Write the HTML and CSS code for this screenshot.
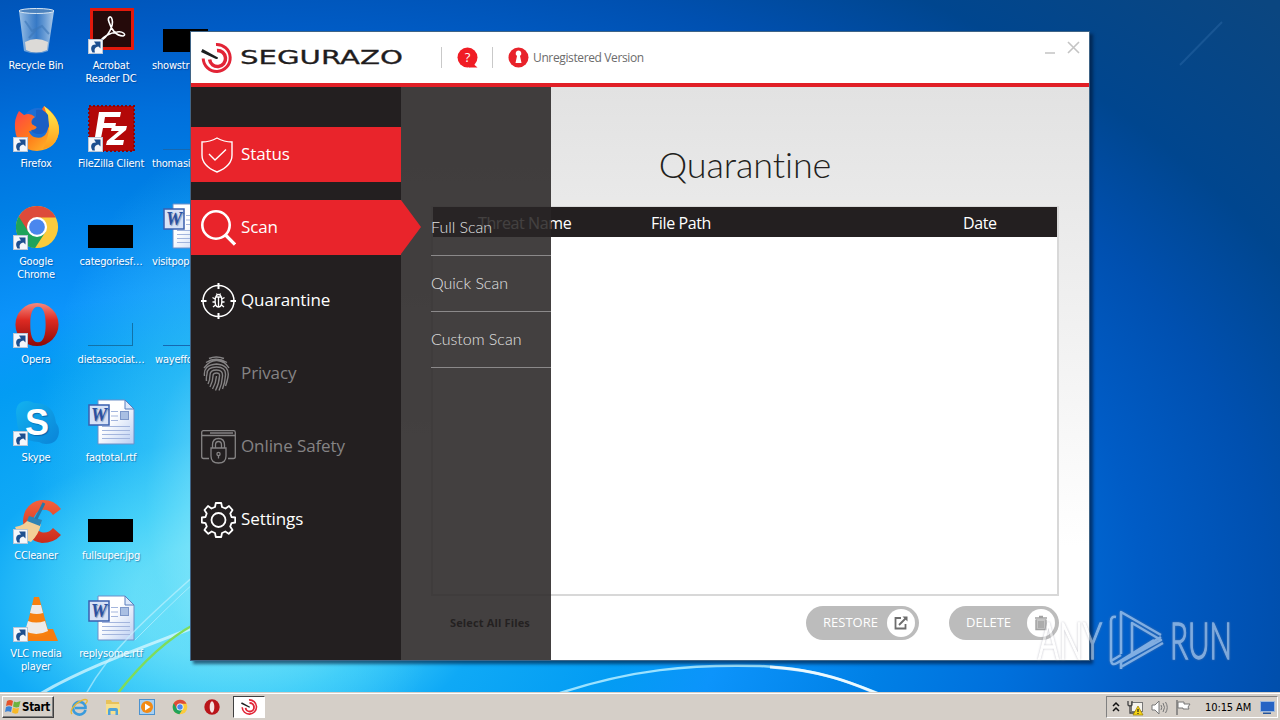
FILE: index.html
```html
<!DOCTYPE html>
<html lang="en">
<head>
    <meta charset="UTF-8">
    <meta name="viewport" content="width=device-width, initial-scale=1.0">
    <title>Segurazo</title>
    <link rel="stylesheet" href="styles.css">
</head>
<body>

    <!-- shared icons -->
    <svg class="defs" width="0" height="0">
        <defs>
            <linearGradient id="fox" x1="0" y1="0" x2="1" y2="1"><stop offset="0" stop-color="#ff3b4e"/><stop offset=".5" stop-color="#ff7a1a"/><stop offset="1" stop-color="#ffcb2e"/></linearGradient>
            <linearGradient id="foxTail" x1="0" y1="0" x2="0" y2="1"><stop offset="0" stop-color="#fff04d"/><stop offset="1" stop-color="#ff9a1c"/></linearGradient>
            <linearGradient id="operaRed" x1="0" y1="0" x2="0" y2="1"><stop offset="0" stop-color="#f58a80"/><stop offset=".4" stop-color="#dd2a22"/><stop offset="1" stop-color="#8c0a08"/></linearGradient>
            <linearGradient id="skypeBlue" x1="0" y1="0" x2="1" y2="1"><stop offset="0" stop-color="#12b2f0"/><stop offset="1" stop-color="#0a84d8"/></linearGradient>
            <linearGradient id="paper" x1="0" y1="0" x2="1" y2="1"><stop offset=".4" stop-color="#fff"/><stop offset="1" stop-color="#b9cdf2"/></linearGradient>
            <linearGradient id="glass" x1="0" y1="0" x2="1" y2="0"><stop offset="0" stop-color="#b8d4ee" stop-opacity=".85"/><stop offset=".5" stop-color="#5b8fc9" stop-opacity=".6"/><stop offset="1" stop-color="#c3daf0" stop-opacity=".9"/></linearGradient>
            <linearGradient id="ccRed" x1="0" y1="0" x2="0" y2="1"><stop offset="0" stop-color="#f5623c"/><stop offset="1" stop-color="#c92b1c"/></linearGradient>
        </defs>
        <symbol id="shortcut" viewBox="0 0 15 15">
            <rect x=".5" y=".5" width="14" height="14" fill="#f4f7fb" stroke="#b9c6d6"/>
            <path d="M4.500 13.500C1.500 8.500 4 5 8 5.500L6 2.500H12.500V9.500L10.500 7.500C7 8 6 10 7 13.500Z" fill="#1d4f8f"/>
        </symbol>
        <symbol id="word" viewBox="0 0 48 48">
            <path d="M11 2H38L47 11V46H11Z" fill="url(#paper)" stroke="#6d8fc8"/>
            <path d="M38 2V11H47Z" fill="#dce8fa" stroke="#5b7fbd"/>
            <path d="M24 13.500H31M24 18H31M24 22.500H31M15 28.500H43M15 32.500H43M15 36.500H43M15 40.500H43" stroke="#a3b5dd"/>
            <rect x="33.500" y="13.500" width="8" height="8" fill="#a9bfe3" stroke="#7d97c9"/>
            <rect x="2" y="7" width="20" height="20" fill="#d7e2f7" stroke="#3a5fae" stroke-width="1.500"/>
            <text x="12" y="23" class="word-letter">W</text>
        </symbol>
        <symbol id="chrome" viewBox="0 0 48 48">
            <circle cx="24" cy="24" r="22" fill="#fbcb3c"/>
            <path d="M24 24L5 13A22 22 0 0 0 22 46L33 29Z" fill="#1fa35b"/>
            <path d="M5 13A22 22 0 0 1 43.500 14H24L15 29Z" fill="#dd4b3a"/>
            <circle cx="24" cy="24" r="10.500" fill="#fff"/>
            <circle cx="24" cy="24" r="8.200" fill="#4a87ee"/>
        </symbol>
        <symbol id="opera" viewBox="0 0 48 48">
            <path fill-rule="evenodd" d="M24 2A22 22 0 1 0 24 47A22 22 0 1 0 24 2ZM25 6C31 6 33 14 33 24.500C33 35 31 43 25 43C19 43 17 35 17 24.500C17 14 19 6 25 6Z" fill="url(#operaRed)"/>
        </symbol>
        <symbol id="logo" viewBox="0 0 32 34">
            <g fill="none" stroke="#e22436" stroke-width="3">
                <path d="M15 3.500A13.500 13.500 0 1 1 2.200 17.500"/>
                <path d="M16 9.500A8 8 0 1 1 8.600 18.500" stroke-width="3.500"/>
            </g>
            <path d="M1.500 8L17 16.500Q17 18.500 15 18L0 11Z" fill="#1c1f20"/>
        </symbol>
    </svg>

    <div class="desktop">
        <svg class="streaks" viewBox="0 0 1280 692" width="1280" height="692">
            <g fill="none">
                <path d="M40 694C90 665 150 645 200 625" stroke="#d9f8ff" stroke-width="3" opacity=".75"/>
                <path d="M86 694C110 650 150 615 195 575" stroke="#c9f4ff" stroke-width="1.500" opacity=".6"/>
                <path d="M135 640C155 620 175 600 195 582" stroke="#c9f4ff" opacity=".6"/>
                <path d="M118 693C140 665 165 640 195 624" stroke="#7fdc5a" stroke-width="2.500"/>
                <path d="M560 693C630 670 690 664 760 666C810 668 845 680 880 694" stroke="#9be2ff" stroke-width="2.500"/>
                <path d="M770 667C820 670 850 682 878 694" stroke="#fff" stroke-width="3" opacity=".8"/>
                <path d="M1180 65L1222 22" stroke="#4d86c4" stroke-width="2" opacity=".25"/>
            </g>
        </svg>

        <div class="icons">
            <div class="shortcut">
                <svg class="icon" viewBox="0 0 48 48">
                    <path d="M7 5L12 45Q24 50 36 45L42 5Z" fill="url(#glass)"/>
                    <path d="M13 36Q24 30 36 36L35 44Q24 49 14 44Z" fill="#dcdad7"/>
                    <path d="M13 15L20 25L30 20L37 28M17 32L24 24" stroke="#3c76b8" stroke-width="2" fill="none" opacity=".6"/>
                    <ellipse cx="24.500" cy="5" rx="17.500" ry="2.500" fill="#4c82bd" stroke="#dbe9f5"/>
                </svg>
                <span>Recycle Bin</span>
            </div>
            <div class="shortcut">
                <svg class="icon" viewBox="0 0 48 48">
                    <rect x="3" y="2" width="44" height="42" fill="#e2190c"/>
                    <rect x="6" y="5" width="38" height="36" fill="#250a0a"/>
                    <path d="M13 35C21 31 27 20 25 13C24 9 20 11 22 16C24 23 29 30 36 30C40 29 36 25 30 26C23 27 18 29 13 35" fill="none" stroke="#fff" stroke-width="1.600"/>
                    <use href="#shortcut" x="1" y="33" width="15" height="15"/>
                </svg>
                <span>Acrobat<br>Reader DC</span>
            </div>
            <div class="shortcut cut">
                <div class="thumb"></div>
                <span>showstr</span>
            </div>

            <div class="shortcut">
                <svg class="icon" viewBox="0 0 48 48">
                    <circle cx="26" cy="20" r="16" fill="#1c6fd6"/>
                    <path d="M30 5Q40 16 35 28Q31 36 22 33Q18 31 17 27Q22 28 25 23L20 20Q18 16 23 13Q18 8 12 11L7 7Q2 15 3 25Q5 46 25 47Q46 45 47 26Q47 12 32 2Z" fill="url(#fox)"/>
                    <path d="M32 2Q48 14 47 28Q44 43 31 45Q37 33 37 22Q36 12 32 2Z" fill="url(#foxTail)"/>
                    <path d="M24 6Q32 5 36 11L37 22Q34 31 27 30Q21 30 19 26Q24 26 25 23L20 20Q19 16 24 13Z" fill="#1a5fc4"/>
                    <use href="#shortcut" x="1" y="33" width="15" height="15"/>
                </svg>
                <span>Firefox</span>
            </div>
            <div class="shortcut">
                <svg class="icon" viewBox="0 0 48 48">
                    <rect x="2" y="2" width="45" height="45" fill="#b30808" stroke="#8b0508" stroke-width="2" stroke-dasharray="2 2"/>
                    <path d="M12 8H34L33 13H18L17 19H29L28 24H16L13 39H7Z" fill="#fff"/>
                    <path d="M25 22H40L39 26L27 36H37L36 41H19L20 37L32 27H24Z" fill="#fff"/>
                    <use href="#shortcut" x="1" y="33" width="15" height="15"/>
                </svg>
                <span>FileZilla Client</span>
            </div>
            <div class="shortcut cut">
                <div class="thumb line"></div>
                <span>thomasin</span>
            </div>

            <div class="shortcut">
                <svg class="icon" viewBox="0 0 48 48">
                    <use href="#chrome" x="2" y="2" width="46" height="46"/>
                    <use href="#shortcut" x="1" y="33" width="15" height="15"/>
                </svg>
                <span>Google<br>Chrome</span>
            </div>
            <div class="shortcut">
                <div class="thumb"></div>
                <span>categoriesf…</span>
            </div>
            <div class="shortcut cut">
                <svg class="icon" viewBox="0 0 48 48"><use href="#word"/></svg>
                <span>visitpopu</span>
            </div>

            <div class="shortcut">
                <svg class="icon" viewBox="0 0 48 48">
                    <use href="#opera" x="2" y="0" width="46" height="48"/>
                    <use href="#shortcut" x="1" y="33" width="15" height="15"/>
                </svg>
                <span>Opera</span>
            </div>
            <div class="shortcut">
                <div class="thumb outline"></div>
                <span>dietassociat…</span>
            </div>
            <div class="shortcut cut late">
                <div class="thumb line"></div>
                <span>wayeffo</span>
            </div>

            <div class="shortcut">
                <svg class="icon" viewBox="0 0 48 48">
                    <path d="M4 15Q4 3 15 3Q19 3 22 5Q42 5 44 25Q47 28 47 34Q46 46 34 46Q30 46 27 44Q6 43 5 24Z" fill="url(#skypeBlue)"/>
                    <text x="25" y="37" class="skype-letter">S</text>
                    <use href="#shortcut" x="1" y="33" width="15" height="15"/>
                </svg>
                <span>Skype</span>
            </div>
            <div class="shortcut">
                <svg class="icon" viewBox="0 0 48 48"><use href="#word"/></svg>
                <span>faqtotal.rtf</span>
            </div>
            <div></div>

            <div class="shortcut">
                <svg class="icon" viewBox="0 0 48 48">
                    <path d="M49 13Q42 3 29 4Q12 7 11 25Q12 44 30 47Q42 47 49 39L41 32Q36 38 29 36Q21 33 21 25Q23 15 30 14Q37 13 41 19Z" fill="url(#ccRed)"/>
                    <path d="M3 31Q14 29 17 22L29 28Q27 38 19 46L8 42Z" fill="#f3cf97"/>
                    <path d="M17 20L30 24L28 30L15 25Z" fill="#2f83b4"/>
                    <path d="M24 23L32 7" stroke="#2878a8" stroke-width="3"/>
                    <use href="#shortcut" x="1" y="33" width="15" height="15"/>
                </svg>
                <span>CCleaner</span>
            </div>
            <div class="shortcut">
                <div class="thumb"></div>
                <span>fullsuper.jpg</span>
            </div>
            <div></div>

            <div class="shortcut">
                <svg class="icon" viewBox="0 0 48 48">
                    <path d="M11 35H41L46 47H6Z" fill="#f57c10"/>
                    <path d="M22 3H27L37 40Q24 46 13 40Z" fill="#f7800f"/>
                    <path d="M20 11H29L31 19Q25 21 18 19ZM16 27Q24 30 33 27L36 37Q24 43 13 37Z" fill="#eeeae8"/>
                    <use href="#shortcut" x="1" y="33" width="15" height="15"/>
                </svg>
                <span>VLC media<br>player</span>
            </div>
            <div class="shortcut">
                <svg class="icon" viewBox="0 0 48 48"><use href="#word"/></svg>
                <span>replysome.rtf</span>
            </div>
        </div>

        <div class="window">
            <div class="header">
                <svg class="brand" viewBox="0 0 202 34" width="202" height="34">
                    <use href="#logo" width="32" height="34"/>
                    <text x="39" y="22.500" class="brand-name" textLength="163" lengthAdjust="spacingAndGlyphs">SEGURAZO</text>
                </svg>
                <div class="header-info">
                    <svg width="21" height="21" viewBox="0 0 21 21">
                        <circle cx="10.500" cy="10.500" r="10" fill="#f01c24"/>
                        <path d="M13 14L20.500 20.500H12Z" fill="#f01c24"/>
                        <text x="10.500" y="15" class="help-mark">?</text>
                    </svg>
                </div>
                <div class="header-info license">
                    <svg width="21" height="21" viewBox="0 0 21 21">
                        <circle cx="10.500" cy="10.500" r="10" fill="#e8222a"/>
                        <path d="M10.500 3.500A3 3 0 0 1 12 9L13.500 16H7.500L9 9A3 3 0 0 1 10.500 3.500Z" fill="#fff"/>
                    </svg>
                    <span>Unregistered Version</span>
                </div>
                <svg class="window-buttons" width="36" height="14" viewBox="0 0 36 14">
                    <path d="M0 12H10M23 1L34 12M34 1L23 12" stroke="#c4c4c4" stroke-width="1.600"/>
                </svg>
            </div>

            <div class="main">
                <div class="sidebar">
                    <div class="menu-item red">
                        <svg width="35" height="36" viewBox="0 0 35 36" fill="none" stroke="#fff" stroke-width="1.400">
                            <path d="M16 1Q23 5 31 5V18Q31 29 16 35Q1 29 1 18V5Q9 5 16 1Z"/>
                            <path d="M8 17L14 23L25 12.500"/>
                        </svg>
                        <span>Status</span>
                    </div>
                    <div class="menu-item red active">
                        <svg width="35" height="36" viewBox="0 0 35 36" fill="none" stroke="#fff">
                            <circle cx="15" cy="15" r="13.700" stroke-width="2.600"/>
                            <path d="M24.500 25L34 34.500" stroke-width="3.200"/>
                        </svg>
                        <span>Scan</span>
                    </div>
                    <div class="menu-item">
                        <svg width="35" height="36" viewBox="0 0 35 36" fill="none" stroke="#fff" stroke-width="1.500">
                            <circle cx="17.500" cy="18" r="15.500"/>
                            <path d="M17.500 0V6M17.500 30V36M0 18H5.500M29.500 18H35" stroke-width="2"/>
                            <path d="M14.500 14H20.500Q22 24 17.500 24Q13 24 14.500 14ZM15 13Q17.500 10 20 13M15.500 10.500L16.500 12.500M19.500 10.500L18.500 12.500M17.500 14V24M14 16L11.500 14.500M14 19H11.500M14.500 22L12 24M21 16L23.500 14.500M21 19H23.500M20.500 22L23 24" stroke-width="1.300"/>
                        </svg>
                        <span>Quarantine</span>
                    </div>
                    <div class="menu-item disabled">
                        <svg width="35" height="36" viewBox="0 0 35 36" fill="none" stroke="#858384" stroke-width="1.400">
                            <path d="M8 2.500Q15 -.5 23 2.500M5 6.500Q15 0 26 6.500M3 12Q9 4 16 4.500Q24 5 28 12M3.500 20Q2 9 15.500 8Q29 9 27 21Q26 26 24.500 30M5.500 25Q5 22 6 18Q6 11 15.500 11Q25 11 24.500 19Q24 27 21.500 33M7 28Q9 24 9 19Q9 14 15.500 14Q22 14 21.500 20Q21 28 18 34.500M9 31Q12 25 12 20Q12 17 15.500 17Q19 17 18.500 20Q18 28 14.500 34.500M11.500 33Q15 27 15.500 20"/>
                        </svg>
                        <span>Privacy</span>
                    </div>
                    <div class="menu-item disabled">
                        <svg width="35" height="36" viewBox="0 0 35 36" fill="none" stroke="#858384" stroke-width="1.300">
                            <path d="M8 29.500H2.500Q.7 29.500 .7 27.500V3.500Q.7 1.700 2.500 1.700H32.500Q34.300 1.700 34.300 3.500V27.500Q34.300 29.500 32.500 29.500H27M.7 6.500H34.300M9 4H32"/>
                            <path d="M10 19H25V27Q25 34 17.500 34Q10 34 10 27ZM11.500 19V16Q11.500 9.500 17.500 9.500Q23.500 9.500 23.500 16V19M14.500 19V16Q14.500 12.500 17.500 12.500Q20.500 12.500 20.500 16V19"/>
                            <circle cx="17.500" cy="25" r="1.600"/>
                            <path d="M17.500 26.500V29.500"/>
                        </svg>
                        <span>Online Safety</span>
                    </div>
                    <div class="menu-item">
                        <svg width="35" height="36" viewBox="0 0 35 36" fill="none" stroke="#fff" stroke-width="1.800" stroke-linejoin="round">
                            <path d="M14.800 1H20.200L21 5L24.500 6.500L28 4L31.500 8L29.300 11.500L30.500 15L34.200 15.500V20.500L30.500 21.200L29.200 24.500L31.500 28L27.700 31.800L24.300 29.500L21 31L20.200 35H14.800L14 31L10.700 29.500L7.300 31.800L3.500 28L5.800 24.500L4.500 21.200L.8 20.500V15.500L4.500 15L5.700 11.500L3.500 8L7 4L10.500 6.500L14 5Z"/>
                            <circle cx="17.500" cy="18" r="7"/>
                        </svg>
                        <span>Settings</span>
                    </div>
                </div>

                <div class="content">
                    <h1>Quarantine</h1>
                    <div class="table">
                        <div class="table-head">
                            <span class="col-name">Threat Name</span>
                            <span class="col-path">File Path</span>
                            <span class="col-date">Date</span>
                        </div>
                    </div>
                    <div class="actions">
                        <span class="select-all">Select All Files</span>
                        <div class="button">
                            <span>RESTORE</span>
                            <svg width="28" height="28" viewBox="0 0 28 28">
                                <circle cx="14" cy="14" r="14" fill="#fff"/>
                                <path d="M14 9H8.500V19.500H18.500V15M12 16L19 9" fill="none" stroke="#6d6d6d" stroke-width="1.800"/>
                                <path d="M15.500 7.500H20.500V12.500Z" fill="#6d6d6d"/>
                            </svg>
                        </div>
                        <div class="button delete">
                            <span>DELETE</span>
                            <svg width="28" height="28" viewBox="0 0 28 28">
                                <circle cx="14" cy="14" r="14" fill="#fff"/>
                                <path d="M9 10H19V20.500H9Z" fill="#c4c4c4"/>
                                <path d="M8 9H20M12 7.500H16M9 10.500V20.500H19V10.500M12 12V19M14 12V19M16 12V19" fill="none" stroke="#a2a2a2" stroke-width="1.400"/>
                            </svg>
                        </div>
                    </div>
                </div>

                <div class="submenu">
                    <div>Full Scan</div>
                    <div>Quick Scan</div>
                    <div>Custom Scan</div>
                </div>
            </div>
        </div>

        <svg class="watermark" width="210" height="64" viewBox="0 0 210 64">
            <text x="3" y="51" textLength="64" lengthAdjust="spacingAndGlyphs">ANY</text>
            <text x="135" y="51" textLength="62" lengthAdjust="spacingAndGlyphs">RUN</text>
            <path d="M81 9Q76 8 76 13V53L86 47M86 42V4L126 27M86 61V54L126 32L97 15V46L126 29M86 4V46M86 59L128 35M76 53Q77 58 82 55L119 32" fill="none" stroke="#fff" stroke-width="2.500" stroke-linejoin="round"/>
        </svg>
    </div>

    <div class="taskbar">
        <div class="start">
            <svg width="16" height="16" viewBox="0 0 16 16">
                <path d="M2 2Q5 0 8 2L7 7Q4 5.500 1 7Z" fill="#e5532b"/>
                <path d="M9 2.500Q12 4 15.500 2L14 8Q11 9 8 7.500Z" fill="#6cb33f"/>
                <path d="M1 8Q4 6.500 7 8L6 13Q3 11.500 0 13Z" fill="#3b83d6"/>
                <path d="M8 8.500Q11 10 14 9L13 14Q10 15.500 7 13.500Z" fill="#f7b928"/>
            </svg>
            <span>Start</span>
        </div>
        <div class="quick">
            <svg width="18" height="18" viewBox="0 0 18 18">
                <path d="M15.500 12A6.300 6.300 0 1 1 15.500 8.500V10H5" fill="none" stroke="#3a9bdc" stroke-width="2.600"/>
                <path d="M2 16Q-1 13 6 6Q14 0 17 2Q18 4 15 6" fill="none" stroke="#e9b92f" stroke-width="1.300"/>
            </svg>
            <svg width="18" height="18" viewBox="0 0 18 18">
                <path d="M2 2H7L8 4H15V16H2Z" fill="#e8c25a"/>
                <path d="M2 6H16V16H2Z" fill="#f7e08e"/>
                <path d="M4 17V12Q4 10 6 10H12Q14 10 14 12V17H11.500V13H6.500V17Z" fill="#4fa3d8"/>
            </svg>
            <svg width="18" height="18" viewBox="0 0 18 18">
                <rect x="1.500" y="1.500" width="15" height="15" fill="#a8d0f2" stroke="#4b92cf"/>
                <circle cx="9" cy="9" r="6" fill="#f28a14"/>
                <path d="M7 5.500L12.500 9L7 12.500Z" fill="#fff"/>
            </svg>
            <svg width="16" height="16" viewBox="0 0 48 48"><use href="#chrome"/></svg>
            <svg width="16" height="16" viewBox="0 0 48 48">
                <circle cx="24" cy="24" r="23" fill="#b9151a"/>
                <ellipse cx="24" cy="24" rx="7" ry="17" fill="#f4e4e2"/>
            </svg>
        </div>
        <div class="task-active">
            <svg width="17" height="18" viewBox="0 0 32 34"><use href="#logo"/></svg>
        </div>
        <div class="tray">
            <svg width="8" height="12" viewBox="0 0 8 12"><path d="M1 5L4 2L7 5M1 10L4 7L7 10" fill="none" stroke="#111" stroke-width="1.500"/></svg>
            <svg width="17" height="17" viewBox="0 0 17 17">
                <rect x="4.500" y="3.500" width="11" height="9" fill="#f5f3ee" stroke="#777"/>
                <path d="M1 2V6Q3 8 5 6V2M3 7V14H8" fill="none" stroke="#444" stroke-width="1.300"/>
                <path d="M11 7L16 16H6Z" fill="#f6d313" stroke="#9a7c00" stroke-width=".7"/>
                <path d="M11 10V13M11 14V15" stroke="#222" stroke-width="1.200"/>
            </svg>
            <svg width="17" height="17" viewBox="0 0 17 17">
                <path d="M1 6H4L8 2V15L4 11H1Z" fill="#fff" stroke="#777"/>
                <path d="M10 6Q11.500 8.500 10 11M12 4Q15 8.500 12 13M14.500 3Q18 8.500 14.500 14" fill="none" stroke="#777"/>
            </svg>
            <svg width="17" height="17" viewBox="0 0 17 17">
                <path d="M2 1V16" stroke="#777" stroke-width="1.500"/>
                <path d="M3 3H9V5H15L13 8L14 10H8V9H3Z" fill="#fff" stroke="#777"/>
            </svg>
            <span>10:15 AM</span>
            <svg width="15" height="13" viewBox="0 0 15 13">
                <rect x=".5" y=".5" width="14" height="10" fill="#2563c4" stroke="#9db8dd"/>
                <path d="M3 11.500H11V13H3Z" fill="#23549c"/>
            </svg>
        </div>
    </div>

</body>
</html>
```
FILE: styles.css
```css
* {
    box-sizing: border-box;
}
body {
    margin: 0;
    width: 1280px;
    height: 720px;
    overflow: hidden;
    display: flex;
    flex-direction: column;
    font-family: "Open Sans", sans-serif;
    font-variant-ligatures: none;
}
svg {
    display: block;
    flex: none;
}
.defs {
    position: absolute;
}
.desktop {
    position: relative;
    height: 692px;
    overflow: hidden;
    background:
        radial-gradient(210px 360px at 240px 500px, rgba(150, 236, 250, 0.8), rgba(80, 215, 248, 0.45) 45%, rgba(20, 180, 245, 0)),
        radial-gradient(1600px 1000px at 230px 600px, #8aeafa 0, #6fe0f9 6%, #3dcbf9 10%, #0fa9f6 16%, #039cf3 25%, #0c94fb 31%, #0080e6 41%, #0070dc 49%, #005cc6 57%, #0050b0 65%, #00468f 74%, #0b4680 88%);
}
.streaks {
    position: absolute;
    top: 0;
    left: 0;
}

/* desktop icons */
.icons {
    display: grid;
    grid-template-columns: repeat(3, 74px);
    grid-auto-rows: 98px;
    column-gap: 1px;
    width: 224px;
    margin-left: -1px;
}
.shortcut {
    padding-top: 6px;
    display: flex;
    flex-direction: column;
    align-items: center;
    gap: 5px;
    font-family: "DejaVu Sans Condensed", "DejaVu Sans", sans-serif;
    font-stretch: condensed;
    font-size: 11px;
    line-height: 13px;
    color: #fff;
    text-align: center;
    white-space: nowrap;
    text-shadow: 1px 1px 1px rgba(0, 30, 90, 0.4);
}
.shortcut span {
    letter-spacing: -0.2px;
}
.shortcut.cut span {
    align-self: flex-start;
    padding-left: 3px;
}
.shortcut.late span {
    padding-left: 6px;
}
.icon {
    width: 48px;
    height: 48px;
    overflow: visible;
}
.thumb {
    width: 45px;
    height: 23px;
    margin: 23px 2px 2px 0;
    background: #000;
}
.thumb.outline {
    background: none;
    border-right: 1px solid #1272a8;
    border-bottom: 1px solid #1272a8;
}
.thumb.line {
    background: linear-gradient(#1668b0, #1668b0) 0 22px / 45px 1px no-repeat;
}
.word-letter {
    font: italic bold 18px "Liberation Serif", serif;
    fill: #2b50a0;
    text-anchor: middle;
}
.skype-letter {
    font: bold 36px "Liberation Sans", sans-serif;
    fill: #fff;
    text-anchor: middle;
}

/* app window */
.window {
    position: absolute;
    left: 190px;
    top: 31px;
    width: 900px;
    height: 630px;
    border: 1px solid #3f6486;
    background: #fff;
    display: flex;
    flex-direction: column;
    box-shadow: 3px 3px 3px rgba(0, 20, 50, 0.6);
}
.header {
    height: 55px;
    border-bottom: 4px solid #e11f26;
    display: flex;
    align-items: center;
    padding-left: 10px;
}
.brand {
    margin-right: 38px;
}
.brand-name {
    font: 19.5px "DejaVu Sans", sans-serif;
    fill: #1f1d1e;
    stroke: #1f1d1e;
    stroke-width: 0.3px;
}
.header-info {
    height: 21px;
    display: flex;
    align-items: center;
    gap: 4px;
    border-left: 1px solid #c9c9c9;
    padding-left: 15px;
    padding-right: 14px;
}
.help-mark {
    font: 13px "Open Sans", sans-serif;
    fill: #fff;
    text-anchor: middle;
}
.license {
    font-size: 12px;
    color: #6c6c6c;
    flex: 1;
}
.license span {
    letter-spacing: -0.37px;
    padding-bottom: 1px;
}
.window-buttons {
    margin: -20px 8px 0 0;
}
.main {
    position: relative;
    flex: 1;
    display: flex;
}
.sidebar {
    position: relative;
    z-index: 2;
    width: 210px;
    background: #231f20;
    padding-top: 40px;
    display: flex;
    flex-direction: column;
    gap: 18px;
}
.menu-item {
    position: relative;
    height: 55px;
    padding-left: 10px;
    display: flex;
    align-items: center;
    gap: 5px;
    font-size: 17px;
    color: #fff;
}
.menu-item span {
    padding-bottom: 2px;
    letter-spacing: -0.1px;
}
.menu-item.red {
    background: #e9242b;
}
.menu-item.disabled {
    color: #858384;
}
.menu-item.active::after {
    content: "";
    position: absolute;
    left: 210px;
    top: 0;
    border: solid transparent;
    border-width: 27.5px 0 27.5px 20px;
    border-left-color: #e9242b;
}
.submenu {
    position: absolute;
    left: 210px;
    top: 0;
    width: 150px;
    height: 100%;
    padding: 113px 0 0 30px;
    background: rgba(41, 37, 38, 0.88);
    font-family: Lato, sans-serif;
    font-size: 16px;
    font-weight: 300;
    color: #e2e2e2;
}
.submenu div {
    height: 56px;
    line-height: 54px;
    border-bottom: 1px solid #8b898a;
}
.content {
    flex: 1;
    padding: 0 30px;
    display: flex;
    flex-direction: column;
    background: linear-gradient(#e2e2e2, #fff 80%);
}
h1 {
    margin: 0;
    height: 119px;
    padding: 54px 0 0;
    line-height: 46px;
    text-align: center;
    font-family: Lato, sans-serif;
    font-size: 36px;
    font-weight: 300;
    letter-spacing: -0.1px;
    color: #231f20;
}
.table {
    height: 390px;
    border: 2px solid #d8d8d8;
    border-top-width: 1px;
    background: #fff;
}
.table-head {
    height: 30px;
    padding-top: 2px;
    display: flex;
    align-items: center;
    background: #231f20;
    color: #fff;
    font-size: 16px;
}
.table-head span {
    letter-spacing: -0.4px;
}
.col-name {
    width: 218px;
    padding-left: 45px;
}
.col-path {
    width: 312px;
}
.actions {
    padding-top: 10px;
    display: flex;
    align-items: center;
}
.select-all {
    flex: 1;
    padding: 0 0 2px 19px;
    font-size: 11px;
    font-weight: bold;
    letter-spacing: 0.15px;
    color: #000;
}
.button {
    width: 113px;
    height: 34px;
    border-radius: 17px;
    background: #bcbcbc;
    color: #fff;
    font-size: 13px;
    display: flex;
    align-items: center;
    justify-content: space-between;
    padding: 0 4px 0 17px;
}
.button span {
    padding-bottom: 2px;
}
.button.delete {
    width: 110px;
    margin-left: 30px;
}
.watermark {
    position: absolute;
    left: 1035px;
    top: 608px;
    opacity: 0.5;
    filter: drop-shadow(0 0 1px #889);
}
.watermark text {
    font: 300 51px Lato, sans-serif;
    fill: #fff;
    stroke: #fff;
    stroke-width: 1.5px;
}

/* taskbar */
.taskbar {
    height: 28px;
    background: #d5cfc8;
    border-top: 1px solid #d5cfc8;
    box-shadow: inset 0 1px #fff;
    display: flex;
    align-items: center;
    padding: 1px 2px 0;
    font-family: "DejaVu Sans Condensed", "DejaVu Sans", sans-serif;
    font-stretch: condensed;
}
.start {
    width: 52px;
    height: 22px;
    display: flex;
    align-items: center;
    gap: 1px;
    padding-left: 2px;
    border: 1px solid;
    border-color: #fff #404040 #404040 #fff;
    box-shadow: inset -1px -1px #808080;
    font-size: 11.5px;
    font-weight: bold;
}
.start span {
    letter-spacing: -0.3px;
}
.quick {
    width: 179px;
    display: flex;
    align-items: center;
    gap: 16px;
    padding-left: 16px;
}
.task-active {
    width: 32px;
    height: 22px;
    display: flex;
    align-items: center;
    justify-content: center;
    background: #fff;
    border: 1px solid;
    border-color: #404040 #fff #fff #404040;
}
.tray {
    margin-left: auto;
    width: 172px;
    height: 22px;
    display: flex;
    align-items: center;
    gap: 7px;
    padding-left: 5px;
    border: 1px solid;
    border-color: #808080 #fff #fff #808080;
    font-size: 11px;
}
.tray span {
    margin: 0 2px 0 6px;
    width: 46px;
    letter-spacing: -0.1px;
    white-space: nowrap;
}
```
